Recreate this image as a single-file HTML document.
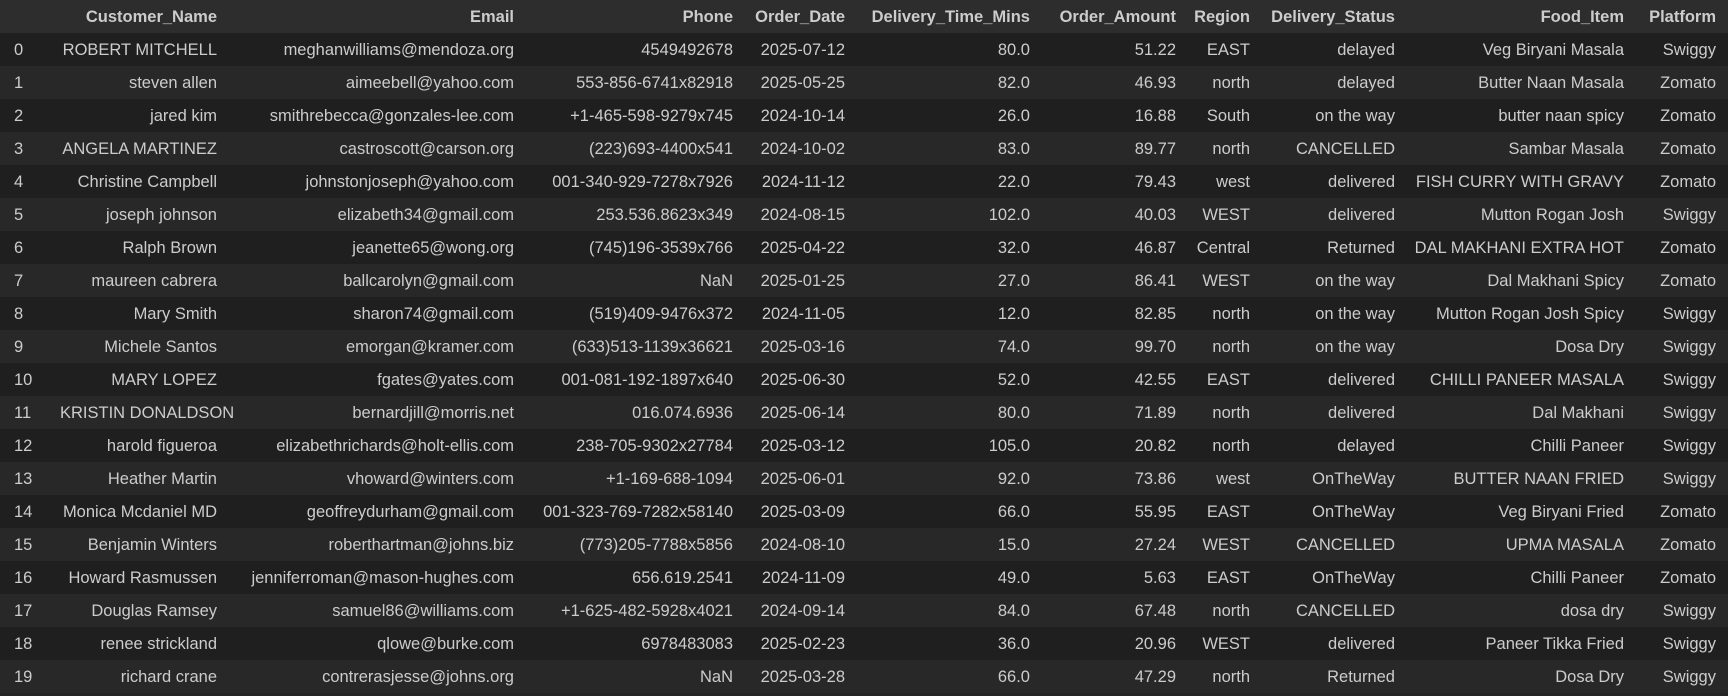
<!DOCTYPE html>
<html><head><meta charset="utf-8"><style>
html,body{margin:0;padding:0;background:#252526;width:1728px;height:696px;overflow:hidden}
table{border-collapse:collapse;table-layout:fixed;width:1728px;font-family:"Liberation Sans",Arial,sans-serif;font-size:16.5px;color:#cccccc}
td,th{height:31px;padding:2px 0 0 0;text-align:right;white-space:nowrap;overflow:visible}
th{font-weight:bold;background:#2d2d2d}
tr:nth-child(even) td{background:#1f1f1f}
tr:nth-child(odd) td{background:#282828}
td:first-child,th:first-child{text-align:left;padding-left:14px}
</style></head><body>
<table>
<colgroup><col style="width:60px"><col style="width:157px"><col style="width:297px"><col style="width:219px"><col style="width:112px"><col style="width:185px"><col style="width:146px"><col style="width:74px"><col style="width:145px"><col style="width:229px"><col style="width:92px"><col style="width:12px"></colgroup>
<tr><th></th><th>Customer_Name</th><th>Email</th><th>Phone</th><th>Order_Date</th><th>Delivery_Time_Mins</th><th>Order_Amount</th><th>Region</th><th>Delivery_Status</th><th>Food_Item</th><th>Platform</th><th></th></tr>
<tr><td>0</td><td>ROBERT MITCHELL</td><td>meghanwilliams@mendoza.org</td><td>4549492678</td><td>2025-07-12</td><td>80.0</td><td>51.22</td><td>EAST</td><td>delayed</td><td>Veg Biryani Masala</td><td>Swiggy</td><td></td></tr>
<tr><td>1</td><td>steven allen</td><td>aimeebell@yahoo.com</td><td>553-856-6741x82918</td><td>2025-05-25</td><td>82.0</td><td>46.93</td><td>north</td><td>delayed</td><td>Butter Naan Masala</td><td>Zomato</td><td></td></tr>
<tr><td>2</td><td>jared kim</td><td>smithrebecca@gonzales-lee.com</td><td>+1-465-598-9279x745</td><td>2024-10-14</td><td>26.0</td><td>16.88</td><td>South</td><td>on the way</td><td>butter naan spicy</td><td>Zomato</td><td></td></tr>
<tr><td>3</td><td>ANGELA MARTINEZ</td><td>castroscott@carson.org</td><td>(223)693-4400x541</td><td>2024-10-02</td><td>83.0</td><td>89.77</td><td>north</td><td>CANCELLED</td><td>Sambar Masala</td><td>Zomato</td><td></td></tr>
<tr><td>4</td><td>Christine Campbell</td><td>johnstonjoseph@yahoo.com</td><td>001-340-929-7278x7926</td><td>2024-11-12</td><td>22.0</td><td>79.43</td><td>west</td><td>delivered</td><td>FISH CURRY WITH GRAVY</td><td>Zomato</td><td></td></tr>
<tr><td>5</td><td>joseph johnson</td><td>elizabeth34@gmail.com</td><td>253.536.8623x349</td><td>2024-08-15</td><td>102.0</td><td>40.03</td><td>WEST</td><td>delivered</td><td>Mutton Rogan Josh</td><td>Swiggy</td><td></td></tr>
<tr><td>6</td><td>Ralph Brown</td><td>jeanette65@wong.org</td><td>(745)196-3539x766</td><td>2025-04-22</td><td>32.0</td><td>46.87</td><td>Central</td><td>Returned</td><td>DAL MAKHANI EXTRA HOT</td><td>Zomato</td><td></td></tr>
<tr><td>7</td><td>maureen cabrera</td><td>ballcarolyn@gmail.com</td><td>NaN</td><td>2025-01-25</td><td>27.0</td><td>86.41</td><td>WEST</td><td>on the way</td><td>Dal Makhani Spicy</td><td>Zomato</td><td></td></tr>
<tr><td>8</td><td>Mary Smith</td><td>sharon74@gmail.com</td><td>(519)409-9476x372</td><td>2024-11-05</td><td>12.0</td><td>82.85</td><td>north</td><td>on the way</td><td>Mutton Rogan Josh Spicy</td><td>Swiggy</td><td></td></tr>
<tr><td>9</td><td>Michele Santos</td><td>emorgan@kramer.com</td><td>(633)513-1139x36621</td><td>2025-03-16</td><td>74.0</td><td>99.70</td><td>north</td><td>on the way</td><td>Dosa Dry</td><td>Swiggy</td><td></td></tr>
<tr><td>10</td><td>MARY LOPEZ</td><td>fgates@yates.com</td><td>001-081-192-1897x640</td><td>2025-06-30</td><td>52.0</td><td>42.55</td><td>EAST</td><td>delivered</td><td>CHILLI PANEER MASALA</td><td>Swiggy</td><td></td></tr>
<tr><td>11</td><td>KRISTIN DONALDSON</td><td>bernardjill@morris.net</td><td>016.074.6936</td><td>2025-06-14</td><td>80.0</td><td>71.89</td><td>north</td><td>delivered</td><td>Dal Makhani</td><td>Swiggy</td><td></td></tr>
<tr><td>12</td><td>harold figueroa</td><td>elizabethrichards@holt-ellis.com</td><td>238-705-9302x27784</td><td>2025-03-12</td><td>105.0</td><td>20.82</td><td>north</td><td>delayed</td><td>Chilli Paneer</td><td>Swiggy</td><td></td></tr>
<tr><td>13</td><td>Heather Martin</td><td>vhoward@winters.com</td><td>+1-169-688-1094</td><td>2025-06-01</td><td>92.0</td><td>73.86</td><td>west</td><td>OnTheWay</td><td>BUTTER NAAN FRIED</td><td>Swiggy</td><td></td></tr>
<tr><td>14</td><td>Monica Mcdaniel MD</td><td>geoffreydurham@gmail.com</td><td>001-323-769-7282x58140</td><td>2025-03-09</td><td>66.0</td><td>55.95</td><td>EAST</td><td>OnTheWay</td><td>Veg Biryani Fried</td><td>Zomato</td><td></td></tr>
<tr><td>15</td><td>Benjamin Winters</td><td>roberthartman@johns.biz</td><td>(773)205-7788x5856</td><td>2024-08-10</td><td>15.0</td><td>27.24</td><td>WEST</td><td>CANCELLED</td><td>UPMA MASALA</td><td>Zomato</td><td></td></tr>
<tr><td>16</td><td>Howard Rasmussen</td><td>jenniferroman@mason-hughes.com</td><td>656.619.2541</td><td>2024-11-09</td><td>49.0</td><td>5.63</td><td>EAST</td><td>OnTheWay</td><td>Chilli Paneer</td><td>Zomato</td><td></td></tr>
<tr><td>17</td><td>Douglas Ramsey</td><td>samuel86@williams.com</td><td>+1-625-482-5928x4021</td><td>2024-09-14</td><td>84.0</td><td>67.48</td><td>north</td><td>CANCELLED</td><td>dosa dry</td><td>Swiggy</td><td></td></tr>
<tr><td>18</td><td>renee strickland</td><td>qlowe@burke.com</td><td>6978483083</td><td>2025-02-23</td><td>36.0</td><td>20.96</td><td>WEST</td><td>delivered</td><td>Paneer Tikka Fried</td><td>Swiggy</td><td></td></tr>
<tr><td>19</td><td>richard crane</td><td>contrerasjesse@johns.org</td><td>NaN</td><td>2025-03-28</td><td>66.0</td><td>47.29</td><td>north</td><td>Returned</td><td>Dosa Dry</td><td>Swiggy</td><td></td></tr>
</table>
</body></html>
